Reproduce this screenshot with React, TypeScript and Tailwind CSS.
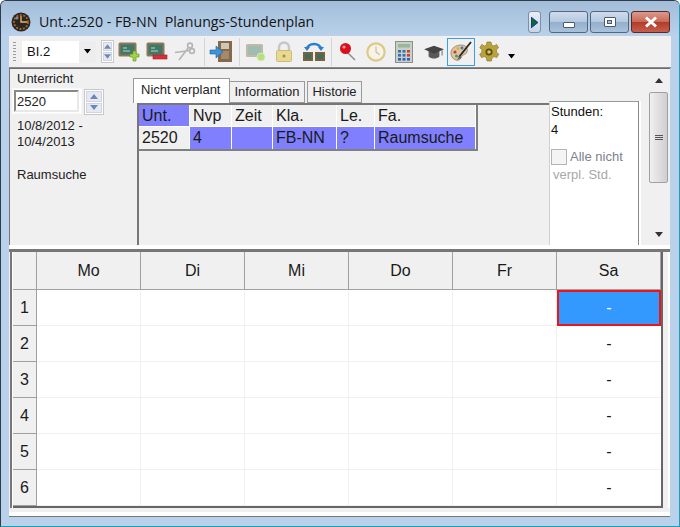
import React from "react";

const Slot = ({ w, children }: { w: string; children?: React.ReactNode }) => (
  <div className={`flex items-center justify-center h-full ${w}`}>{children}</div>
);

const Sep = ({ ml }: { ml: string }) => <div className={`w-px h-[28px] bg-[#d4d4d4] ${ml}`} />;

const Board = () => (
  <g>
    <rect x="0.5" y="1.5" width="18" height="14" rx="1.5" fill="#8f7755" />
    <rect x="2.5" y="3.5" width="14" height="10" fill="#3f7868" />
    <path d="M5 7h4M5 10h7" stroke="#b4d6ca" strokeWidth="1" />
  </g>
);

const AddIcon = () => (
  <svg width="22" height="22" viewBox="0 0 22 22">
    <Board />
    <path d="M12 13h3v-3h3v3h3v3h-3v4h-3v-4h-3z" fill="#a4d24a" stroke="#6d9a24" strokeWidth="0.7" />
  </svg>
);
const RemoveIcon = () => (
  <svg width="22" height="22" viewBox="0 0 22 22">
    <Board />
    <rect x="7" y="14" width="14" height="4" fill="#d8303a" stroke="#a61c24" strokeWidth="0.6" />
  </svg>
);
const ScissorsIcon = () => (
  <svg width="22" height="22" viewBox="0 0 22 22" fill="none" stroke="#b4b4b4" strokeWidth="1.6">
    <circle cx="16" cy="4.5" r="2.4" />
    <circle cx="18" cy="10" r="2.4" />
    <path d="M14.5 6.5 5 19M15.5 9.5 1 11.5" />
  </svg>
);
const DoorIcon = () => (
  <svg width="24" height="24" viewBox="0 0 24 24">
    <rect x="9" y="1" width="14" height="21" fill="#86694a" />
    <rect x="12" y="3" width="8" height="6" fill="#cfc7b6" />
    <rect x="12" y="11" width="8" height="8" fill="#a48a6a" />
    <path d="M1 10h6V6l7 6-7 6v-4H1z" fill="#3f92d8" stroke="#1f5f9c" strokeWidth="0.6" />
  </svg>
);
const BoardDot = () => (
  <svg width="22" height="22" viewBox="0 0 22 22">
    <rect x="1" y="3" width="17" height="13" rx="1.5" fill="#c3b8a7" />
    <rect x="3" y="5" width="13" height="9" fill="#9dbdb3" />
    <circle cx="16" cy="16" r="4" fill="#b5e07a" stroke="#d8e8c8" />
  </svg>
);
const LockIcon = () => (
  <svg width="20" height="22" viewBox="0 0 20 22">
    <path d="M5 10V6.5a5 5 0 0 1 10 0V10" fill="none" stroke="#c6c6c6" strokeWidth="2.4" />
    <rect x="2.5" y="9.5" width="15" height="11" rx="1" fill="#e9d890" stroke="#cdbb78" />
    <circle cx="10" cy="15" r="1.5" fill="#a08c50" />
  </svg>
);
const SwapIcon = () => (
  <svg width="24" height="22" viewBox="0 0 24 22">
    <path d="M5 8a7 5 0 0 1 14 0" fill="none" stroke="#2b7fd0" strokeWidth="2.4" />
    <path d="M2 6l3 4 3-4zM16 6l3 4 3-4z" fill="#2b7fd0" />
    <rect x="1" y="11" width="10" height="9" fill="#7c6238" />
    <rect x="13" y="11" width="10" height="9" fill="#7c6238" />
    <rect x="3" y="13" width="6" height="5" fill="#3b6f62" />
    <rect x="15" y="13" width="6" height="5" fill="#3b6f62" />
  </svg>
);
const PinIcon = () => (
  <svg width="20" height="22" viewBox="0 0 20 22">
    <path d="M8 11l8 8" stroke="#8a8a8a" strokeWidth="1.4" />
    <circle cx="6.5" cy="7.5" r="5.5" fill="#d8101c" />
    <circle cx="5" cy="6" r="1.6" fill="#f79aa0" />
  </svg>
);
const ClockIcon = () => (
  <svg width="22" height="22" viewBox="0 0 22 22">
    <circle cx="11" cy="11" r="9.5" fill="#f7f3e6" stroke="#dcc986" strokeWidth="2.4" />
    <path d="M11 5v6l4 3" stroke="#c8b8a0" strokeWidth="1.2" fill="none" />
  </svg>
);
const CalcIcon = () => (
  <svg width="18" height="22" viewBox="0 0 18 22">
    <rect x="0.5" y="0.5" width="17" height="21" fill="#c9d0c8" stroke="#8b918a" />
    <rect x="3" y="3" width="12" height="3.5" fill="#9ab79a" />
    {[9, 13, 17].map((y) =>
      [3, 7.5, 12].map((x) => (
        <rect key={`${x}-${y}`} x={x} y={y} width="3" height="2.6" fill={y === 17 ? "#2d62c0" : x === 12 ? "#c8423a" : "#3d6fb0"} />
      ))
    )}
  </svg>
);
const CapIcon = () => (
  <svg width="22" height="18" viewBox="0 0 24 20">
    <path d="M6 9v6c3 3 9 3 12 0V9z" fill="#5a5a5a" />
    <path d="M1 7l11-4 11 4-11 5z" fill="#444" />
    <path d="M21 8v6" stroke="#777" strokeWidth="1.2" />
  </svg>
);
const PaletteIcon = () => (
  <svg width="24" height="24" viewBox="0 0 24 24">
    <path d="M2 13c0-5 5-8 10-8 5 0 7 3 6 7-1 3-4 2-5 4-1 3-3 5-6 4-3-1-5-3-5-7z" fill="#dcc4a4" stroke="#8a6f52" strokeWidth="0.7" />
    <circle cx="6" cy="12" r="1.6" fill="#c83a3a" />
    <circle cx="9" cy="8.5" r="1.5" fill="#e0b030" />
    <circle cx="13" cy="8" r="1.4" fill="#3a70c8" />
    <circle cx="7.5" cy="16" r="1.5" fill="#48a050" />
    <path d="M22 2 10 17" stroke="#222" strokeWidth="1.8" />
    <path d="M11 15l-3 5 4-2z" fill="#555" />
  </svg>
);
const GearIcon = () => (
  <svg width="22" height="22" viewBox="0 0 22 22">
    <path d="M9 1h4l.6 3 2.4 1 2.6-1.6 2 3.4-2.2 2 .2 2.4 2.2 2-2 3.4-2.8-1-2 1.4-.6 3H9l-.6-3-2-1.4-2.8 1-2-3.4 2.2-2 .2-2.4-2.2-2 2-3.4L6.400 5l2-1z" fill="#b9a23c" stroke="#81701f" strokeWidth="0.6" />
    <circle cx="11" cy="11" r="3.600" fill="#5a4f1c" />
    <circle cx="11" cy="11" r="1.800" fill="#d8c860" />
  </svg>
);
const ClockLogo = () => (
  <svg width="20" height="20" viewBox="0 0 20 20">
    <circle cx="10" cy="10" r="9.500" fill="#2b2622" />
    <circle cx="10" cy="10" r="7" fill="none" stroke="#a4682f" strokeWidth="1.800" strokeDasharray="2 1.500" />
    <path d="M10 4v6h6" stroke="#f0b060" strokeWidth="1.400" fill="none" />
    <circle cx="6" cy="6" r="1.500" fill="#8a8a8a" />
  </svg>
);
const Tri = ({ up, color = "#000", w = 8 }: { up?: boolean; color?: string; w?: number }) => (
  <svg width={w} height={w / 2 + 1} viewBox="0 0 8 5">
    <path d={up ? "M4 0l4 5H0z" : "M0 0h8L4 5z"} fill={color} />
  </svg>
);
const Spin = ({ cls }: { cls: string }) => (
  <div className={`flex flex-col border border-[#c8c8c8] bg-white p-px gap-px ${cls}`}>
    <div className="flex-1 flex items-center justify-center bg-[#e6e9f0] border border-[#d0d4de]">
      <Tri up color="#6f86b8" />
    </div>
    <div className="flex-1 flex items-center justify-center bg-[#e6e9f0] border border-[#d0d4de]">
      <Tri color="#6f86b8" />
    </div>
  </div>
);

const tableCols = ["Unt.", "Nvp", "Zeit", "Kla.", "Le.", "Fa."];
const tableVals = ["2520", "4", "", "FB-NN", "?", "Raumsuche"];
const days = ["Mo", "Di", "Mi", "Do", "Fr", "Sa"];
const rows = [1, 2, 3, 4, 5, 6];

export default function App() {
  return (
    <div className="w-[680px] h-[527px] overflow-hidden relative flex flex-col bg-[#b9d1ea] border border-[#2c3c48] border-r-[#1aa0b4] border-b-[#1aa0b4] rounded-t-[6px] font-['Liberation_Sans',Arial,sans-serif] text-[#111]">
      {/* title bar */}
      <div className="h-[35px] shrink-0 flex items-center pl-[10px] pr-[9px] bg-gradient-to-b from-[#a3bdda] to-[#b9d1ea]">
        <div className="mt-[8px] flex items-center">
          <ClockLogo />
          <span className="ml-[8px] -mt-[1px] text-[14.2px] whitespace-pre font-['Open_Sans',sans-serif] text-[#141414]">Unt.:2520 - FB-NN  Planungs-Stundenplan</span>
        </div>
        <div className="ml-auto flex items-center mt-[7px]">
          <div className="w-[13px] h-[22px] rounded-[3px] border border-[#7f8ea0] bg-gradient-to-b from-[#e8eef6] to-[#c8d6e6] flex items-center justify-center mr-[8px]">
            <svg width="7" height="11" viewBox="0 0 7 11"><path d="M0 0l7 5.500L0 11z" fill="#0a6a2a" stroke="#1020d0" strokeWidth="0.8" /></svg>
          </div>
          <div className="w-[39px] h-[22px] rounded-[3px] border border-[#56677c] bg-[linear-gradient(#cfdcec_0%,#b5c9e0_48%,#94afcc_50%,#a9c2dc_100%)] flex items-center justify-center mr-[2px]">
            <div className="w-[12px] h-[6px] mt-[5px] bg-white border border-[#4a5a6c] rounded-[1px]" />
          </div>
          <div className="w-[39px] h-[22px] rounded-[3px] border border-[#56677c] bg-[linear-gradient(#cfdcec_0%,#b5c9e0_48%,#94afcc_50%,#a9c2dc_100%)] flex items-center justify-center mr-[2px]">
            <div className="w-[12px] h-[10px] bg-white border border-[#4a5a6c] rounded-[1px] flex items-center justify-center">
              <div className="w-[5px] h-[4px] bg-[#a9c2dc] border border-[#4a5a6c]" />
            </div>
          </div>
          <div className="w-[39px] h-[22px] rounded-[3px] border border-[#5c2a24] bg-[linear-gradient(#dc9a8c_0%,#c96a58_48%,#b23a28_50%,#c4604c_100%)] flex items-center justify-center">
            <svg width="14" height="12" viewBox="0 0 14 12"><path d="M2 1.500l10 9M12 1.500l-10 9" stroke="#fff" strokeWidth="3" /></svg>
          </div>
        </div>
      </div>

      {/* toolbar */}
      <div className="h-[32px] shrink-0 ml-[8px] mr-[8px] flex items-center bg-[#f0f0f0] border-b border-[#8a8a8a]">
        <div className="ml-[4px] w-[3px] h-[20px] bg-[repeating-linear-gradient(#9a9a9a_0px,#9a9a9a_1px,transparent_1px,transparent_3px)]" />
        <div className="ml-[6px] w-[74px] h-[22px] bg-white flex items-stretch">
          <span className="flex-1 pl-[5px] text-[13px] leading-[22px]">BI.2</span>
          <div className="w-[17px] bg-[#ededed] flex items-center justify-center"><Tri w={7} /></div>
        </div>
        <Spin cls="ml-[5px] w-[13px] h-[23px]" />
        <Slot w="ml-[1px] w-[28px]"><AddIcon /></Slot>
        <Slot w="w-[27px]"><RemoveIcon /></Slot>
        <Slot w="w-[29px]"><ScissorsIcon /></Slot>
        <Sep ml="ml-[5px]" />
        <Slot w="w-[32px]"><DoorIcon /></Slot>
        <Sep ml="ml-[2px]" />
        <Slot w="w-[32px]"><BoardDot /></Slot>
        <Slot w="w-[24px]"><LockIcon /></Slot>
        <Slot w="w-[35px]"><SwapIcon /></Slot>
        <Sep ml="" />
        <Slot w="w-[34px]"><PinIcon /></Slot>
        <Slot w="w-[20px]"><ClockIcon /></Slot>
        <Slot w="w-[36px]"><CalcIcon /></Slot>
        <Slot w="w-[24px]"><CapIcon /></Slot>
        <div className="ml-[1px] w-[28px] h-[28px] border border-[#3a9cf0] flex items-center justify-center"><PaletteIcon /></div>
        <Slot w="w-[28px]"><GearIcon /></Slot>
        <Slot w="w-[16px]"><div className="mt-[10px]"><Tri w={7} /></div></Slot>
      </div>

      {/* upper panel */}
      <div className="h-[177px] shrink-0 ml-[8px] mr-[9px] flex bg-[#f0f0f0] border-l border-[#777] border-t border-t-[#6d6d6d] overflow-hidden">
        <div className="w-[123px] shrink-0 pt-[2px] text-[13px] leading-[16px] text-[#222]">
          <div className="pl-[7px]">Unterricht</div>
          <div className="flex items-start pl-[2px] mt-px">
            <div className="w-[70px] h-[26px] bg-white border border-[#f8f8f8] flex">
              <div className="flex-1 m-px mr-[2px] border-2 border-[#888] border-r-[#e8e8e8] border-b-[#e8e8e8] pl-px text-[13px] leading-[19px]">2520</div>
            </div>
            <Spin cls="ml-[2px] w-[20px] h-[26px] mt-px" />
          </div>
          <div className="pl-[7px] mt-[3px]">10/8/2012 -</div>
          <div className="pl-[7px]">10/4/2013</div>
          <div className="pl-[7px] mt-[17px]">Raumsuche</div>
        </div>

        <div className="w-[416px] shrink-0 flex flex-col pt-[9px]">
          <div className="flex items-end h-[25px] text-[13px] whitespace-nowrap">
            <div className="w-[97px] h-[25px] bg-white border border-[#999] border-b-0 pl-[7px] leading-[21px] text-[#222] z-10">Nicht verplant</div>
            <div className="w-[75px] h-[22px] bg-[#f0f0f0] border border-[#999] border-l-0 text-center leading-[20px] text-[#222]">Information</div>
            <div className="ml-[2px] w-[55px] h-[22px] bg-[#f0f0f0] border border-[#999] text-center leading-[20px] text-[#222]">Historie</div>
          </div>
          <div className="ml-[4px] flex-1 border-l-2 border-t-2 border-[#777]">
            <div className="w-[339px] grid grid-cols-[51px_42px_41px_64px_38px_101px] grid-rows-[22px_22px] border-b-2 border-r-2 border-[#808080] text-[16px] leading-[21px] text-[#1a1a1a]">
              {tableCols.map((c, i) => (
                <div key={c} className={`pl-[3px] border-r border-b border-[#fff] ${i === 0 ? "bg-[#8080ff]" : "bg-[#f0f0f0]"}`}>{c}</div>
              ))}
              {tableVals.map((c, i) => (
                <div key={i} className={`pl-[3px] border-r border-[#fff] ${i === 0 ? "bg-[#f0f0f0]" : "bg-[#8080ff]"}`}>{c}</div>
              ))}
            </div>
          </div>
        </div>

        <div className="w-[90px] shrink-0 mt-[32px] bg-white border-l border-[#d0d0d0] border-t border-t-[#999] border-r border-r-[#888] pl-px pt-px text-[13px] leading-[18px] text-[#111]">
          <div>Stunden:</div>
          <div>4</div>
          <div className="flex items-center mt-[9px]">
            <div className="w-[16px] h-[16px] border border-[#b4b4b4] bg-[#f4f4f4]" />
            <span className="ml-[3px] text-[#808090]">Alle nicht</span>
          </div>
          <div className="pl-[2px] text-[#a8a8a8]">verpl. Std.</div>
        </div>
        <div className="w-[2px] shrink-0 mt-[32px] bg-white" />

        <div className="ml-[8px] w-[19px] shrink-0 flex flex-col items-center">
          <div className="h-[23px] flex items-center justify-center"><Tri up color="#333" /></div>
          <div className="w-[19px] h-[91px] rounded-[2px] border border-[#a0a0a0] bg-gradient-to-r from-[#f0f0f0] to-[#cfcfcf] flex flex-col items-center justify-center gap-px">
            <div className="w-[8px] h-px bg-[#555]" />
            <div className="w-[8px] h-px bg-[#555]" />
            <div className="w-[8px] h-px bg-[#555]" />
          </div>
          <div className="flex-1 flex items-end pb-[8px]"><Tri color="#333" /></div>
        </div>
      </div>

      {/* splitter */}
      <div className="h-[7px] shrink-0 ml-[8px] mr-[9px] bg-white border-b-[3px] border-[#777]" />

      {/* grid panel */}
      <div className="h-[264px] shrink-0 ml-[8px] mr-[9px] bg-[#f0f0f0] flex flex-col">
        <div className="ml-px pl-px h-[256px] border-l-2 border-[#777] bg-white flex">
          <div className="w-[650px] h-[256px] bg-white border-b-2 border-r-2 border-[#666] grid grid-cols-[24px_104px_104px_104px_104px_104px_104px] grid-rows-[38px_36px_36px_36px_36px_36px_36px] text-[16px] text-[#1a1a1a]">
            <div className="bg-[#f0f0f0] border-r border-b border-[#a0a0a0]" />
            {days.map((d) => (
              <div key={d} className="bg-[#f0f0f0] border-r border-b border-[#a0a0a0] flex items-center justify-center">{d}</div>
            ))}
            {rows.map((r) => (
              <React.Fragment key={r}>
                <div className="bg-[#f0f0f0] border-r border-b border-[#a0a0a0] flex items-center justify-center">{r}</div>
                {days.map((d, i) =>
                  i < 5 ? (
                    <div key={d} className="border-r border-b border-[#f0f0f0]" />
                  ) : r === 1 ? (
                    <div key={d} className="bg-[#3399ff] border-2 border-[#f01414] flex items-center justify-center text-white">-</div>
                  ) : (
                    <div key={d} className="border-b border-[#f0f0f0] flex items-center justify-center">-</div>
                  )
                )}
              </React.Fragment>
            ))}
          </div>
          <div className="flex-1 bg-[#f0f0f0] border-r-2 border-white" />
        </div>
        <div className="flex-1 bg-[#f0f0f0]" />
        <div className="h-[4px] bg-white" />
      </div>
      <div className="h-px ml-[8px] mr-[9px] shrink-0 bg-[#777]" />
    </div>
  );
}
